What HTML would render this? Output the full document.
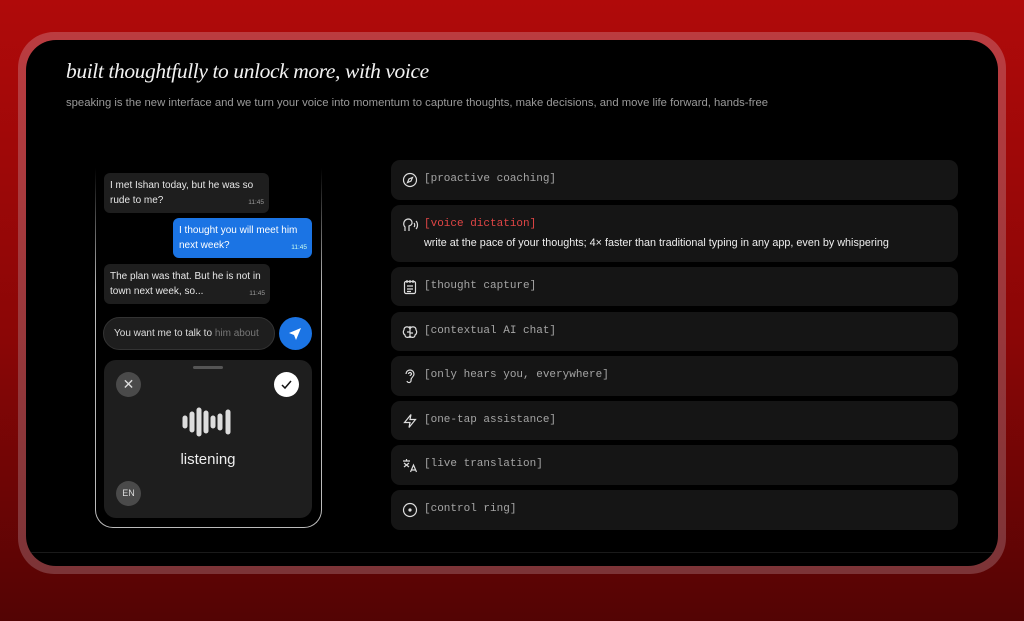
<!DOCTYPE html><html><head><style>
*{margin:0;padding:0;box-sizing:border-box}
body{width:1024px;height:621px;overflow:hidden;background:linear-gradient(#b00a0a,#8a0606 55%,#530404);font-family:"Liberation Sans",sans-serif;position:relative}
.frame{position:absolute;left:18px;top:32px;width:988px;height:542px;border-radius:36px;background:linear-gradient(#bb3c40,#7c3437)}
.inner{position:absolute;left:26px;top:40px;width:972px;height:526px;border-radius:30px;background:#000;overflow:hidden}
h1{position:absolute;left:40px;top:19px;font-family:"Liberation Serif",serif;font-style:italic;font-weight:normal;font-size:21.5px;color:#f2f2f2;letter-spacing:-0.4px}
.sub{position:absolute;left:40px;top:57px;font-size:11.3px;color:#9a9a9a}
.phone{position:absolute;left:69px;top:100px;width:227px;height:388px;border:1px solid #bbb;border-top:none;border-radius:0 0 18px 18px}
.phone:before{content:"";position:absolute;left:-2px;right:-2px;top:-2px;height:150px;background:linear-gradient(#000 20%,rgba(0,0,0,0))}
.b{position:absolute;border-radius:6px;font-size:10px;line-height:15px;color:#e8e8e8;padding:5px 6px}
.b i{position:absolute;right:5px;bottom:3px;font-style:normal;font-size:6.5px;color:#999}
.row{position:absolute;left:365px;width:567px;background:#151515;border-radius:9px}
.row span{position:absolute;left:33px;top:13px;font-family:"Liberation Mono",monospace;font-size:11px;color:#a5a5a5}
.row svg{position:absolute;left:11px;top:12px}
</style></head><body>
<div class="frame"></div>
<div class="inner">
<h1>built thoughtfully to unlock more, with voice</h1>
<div class="sub">speaking is the new interface and we turn your voice into momentum to capture thoughts, make decisions, and move life forward, hands-free</div>
<div class="phone"></div>
<div class="b" style="left:78px;top:133px;width:165px;background:#1e1e1e">I met Ishan today, but he was so rude to me?<i>11:45</i></div>
<div class="b" style="left:147px;top:178px;width:139px;background:#1b74e4;color:#fff">I thought you will meet him next week?<i style="color:#cfe">11:45</i></div>
<div class="b" style="left:78px;top:224px;width:166px;background:#1e1e1e">The plan was that. But he is not in town next week, so...<i>11:45</i></div>
<div style="position:absolute;left:77px;top:277px;width:172px;height:33px;border-radius:17px;background:#1e1e1e;border:1px solid #333;font-size:10px;color:#ddd;padding:10px 10px">You want me to talk to <span style="color:#777">him about</span></div>
<div style="position:absolute;left:253px;top:277px;width:33px;height:33px;border-radius:50%;background:#1b74e4"><svg width="33" height="33" viewBox="0 0 33 33"><path d="M22 11 L10 16 L15 18 L17 23 Z" fill="#fff"/></svg></div>
<div style="position:absolute;left:78px;top:320px;width:208px;height:158px;border-radius:12px;background:#1e1e1e">
<div style="position:absolute;left:89px;top:6px;width:30px;height:3px;border-radius:2px;background:#555"></div>
<div style="position:absolute;left:12px;top:12px;width:25px;height:25px;border-radius:50%;background:#4a4a4a;color:#ddd;text-align:center;line-height:25px;font-size:14px">✕</div>
<div style="position:absolute;left:170px;top:12px;width:25px;height:25px;border-radius:50%;background:#fff"><svg width="25" height="25"><path d="M8 13 L11 16 L17 9" stroke="#111" stroke-width="1.5" fill="none"/></svg></div>
<svg style="position:absolute;left:76px;top:47px" width="56" height="30"><g stroke="#ddd" stroke-width="5" stroke-linecap="round"><path d="M5 11v8M12 7v16M19 3v24M26 6v18M33 11v8M40 9v12M48 5v20"/></g></svg>
<div style="position:absolute;left:0;width:208px;top:91px;text-align:center;color:#eee;font-size:15px">listening</div>
<div style="position:absolute;left:12px;top:121px;width:25px;height:25px;border-radius:50%;background:#4a4a4a;color:#ddd;text-align:center;line-height:25px;font-size:9px">EN</div>
</div>
<div class="row" style="top:120px;height:40px"><svg width="16" height="16" viewBox="0 0 16 16" fill="none" stroke="#ddd" stroke-width="1.2"><circle cx="8" cy="8" r="6.5"/><path d="M10.5 5.5 9 9 5.5 10.5 7 7Z"/></svg><span>[proactive coaching]</span></div>
<div class="row" style="top:165px;height:57px"><svg width="18" height="16" viewBox="0 0 18 16" fill="none" stroke="#ddd" stroke-width="1.2"><path d="M3 14V10C1 8 1 3 6 2c4 0 5 4 3 6L7 9v5M12 6c1 1 1 3 0 4M14 4c2 2 2 6 0 8"/></svg><span style="color:#e04545">[voice dictation]</span><div style="position:absolute;left:33px;top:32px;font-size:10.8px;color:#eee">write at the pace of your thoughts; 4× faster than traditional typing in any app, even by whispering</div></div>
<div class="row" style="top:227px;height:39px"><svg width="16" height="16" viewBox="0 0 16 16" fill="none" stroke="#ddd" stroke-width="1.2"><rect x="2.5" y="2.5" width="11" height="12" rx="1.5"/><path d="M5 1v3M8 1v3M11 1v3M5 7h6M5 10h6M5 12.5h4"/></svg><span>[thought capture]</span></div>
<div class="row" style="top:272px;height:39px"><svg width="16" height="16" viewBox="0 0 16 16" fill="none" stroke="#ddd" stroke-width="1.2"><path d="M8 2v12M8 5c-1-3-6-3-6 1-1 1-1 4 1 5 0 3 4 3 5 1M8 5c1-3 6-3 6 1 1 1 1 4-1 5 0 3-4 3-5 1M5 8h3M8 9h3"/></svg><span>[contextual AI chat]</span></div>
<div class="row" style="top:316px;height:40px"><svg width="16" height="16" viewBox="0 0 16 16" fill="none" stroke="#ddd" stroke-width="1.2"><path d="M4 6a4 4 0 018 0c0 3-3 3-3 6a2 2 0 01-4 1M6.5 6a1.5 1.5 0 013 0c0 1-1.5 1-1.5 2"/></svg><span>[only hears you, everywhere]</span></div>
<div class="row" style="top:361px;height:39px"><svg width="16" height="16" viewBox="0 0 16 16" fill="none" stroke="#ddd" stroke-width="1.2"><path d="M9 1.5 2.5 9.5H8L7 14.5 13.5 6.5H8Z"/></svg><span>[one-tap assistance]</span></div>
<div class="row" style="top:405px;height:40px"><svg width="16" height="16" viewBox="0 0 16 16" fill="none" stroke="#ddd" stroke-width="1.2"><path d="M1 4h7M4.5 2v2M2 6l5 4M7 6l-5 4M8.5 15l3-7 3 7M9.5 13h4"/></svg><span>[live translation]</span></div>
<div class="row" style="top:450px;height:40px"><svg width="16" height="16" viewBox="0 0 16 16" fill="none" stroke="#ddd" stroke-width="1.2"><circle cx="8" cy="8" r="6.5"/><circle cx="8" cy="8" r="1" fill="#ddd"/></svg><span>[control ring]</span></div>
<div style="position:absolute;left:0;right:0;top:512px;height:1px;background:#1a1a1a"></div>
</div>
</body></html>
